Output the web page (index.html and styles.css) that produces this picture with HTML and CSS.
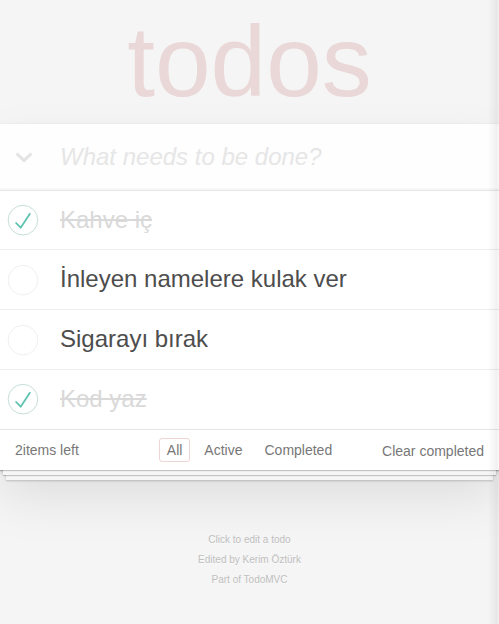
FILE: index.html
```html
<!DOCTYPE html>
<html lang="tr">
<head>
<meta charset="utf-8">
<title>todos</title>
<link rel="stylesheet" href="styles.css">
</head>
<body>
<h1 class="title">todos</h1>
<section class="todoapp">
  <header class="entry">
    <span class="toggle-all">
      <svg width="18" height="11" viewBox="0 0 18 11"><polyline points="1.5,1.5 9,8.5 16.5,1.5" fill="none" stroke="#e3e3e3" stroke-width="3"/></svg>
    </span>
    <input class="new-todo" placeholder="What needs to be done?">
  </header>
  <ul class="todo-list">
    <li class="todo done">
      <svg class="check" width="40" height="40" viewBox="-10 -18 100 135"><circle cx="50" cy="50" r="50" fill="none" stroke="#bddad5" stroke-width="3"/><path fill="#5dc2af" d="M72 25L42 71 27 56l-4 4 20 20 34-52z"/></svg>
      <span class="todo-text">Kahve iç</span>
    </li>
    <li class="todo">
      <svg class="check" width="40" height="40" viewBox="-10 -18 100 135"><circle cx="50" cy="50" r="50" fill="none" stroke="#ededed" stroke-width="3"/></svg>
      <span class="todo-text">İnleyen namelere kulak ver</span>
    </li>
    <li class="todo">
      <svg class="check" width="40" height="40" viewBox="-10 -18 100 135"><circle cx="50" cy="50" r="50" fill="none" stroke="#ededed" stroke-width="3"/></svg>
      <span class="todo-text">Sigarayı bırak</span>
    </li>
    <li class="todo done">
      <svg class="check" width="40" height="40" viewBox="-10 -18 100 135"><circle cx="50" cy="50" r="50" fill="none" stroke="#bddad5" stroke-width="3"/><path fill="#5dc2af" d="M72 25L42 71 27 56l-4 4 20 20 34-52z"/></svg>
      <span class="todo-text">Kod yaz</span>
    </li>
  </ul>
  <footer class="footer">
    <span class="count">2items left</span>
    <ul class="filters">
      <li><a class="selected" href="#/">All</a></li>
      <li><a href="#/active">Active</a></li>
      <li><a href="#/completed">Completed</a></li>
    </ul>
    <button class="clear">Clear completed</button>
  </footer>
</section>
<footer class="info">
  <p>Click to edit a todo</p>
  <p>Edited by Kerim Öztürk</p>
  <p>Part of TodoMVC</p>
</footer>
</body>
</html>
```
FILE: styles.css
```css
html, body {
  margin: 0;
  padding: 0;
}

body {
  background: #f5f5f5;
  color: #4d4d4d;
  font-family: "Liberation Sans", Arial, sans-serif;
  font-size: 14px;
  line-height: 1.4em;
  min-width: 230px;
  max-width: 550px;
  margin: 0 auto;
}

body::after {
  content: '';
  position: fixed;
  top: 0;
  right: 0;
  bottom: 0;
  width: 11px;
  background: linear-gradient(to right, rgba(0,0,0,0), rgba(0,0,0,0.055) 80%, rgba(0,0,0,0.025));
  pointer-events: none;
}

.title {
  margin: 11px 0 0;
  font-size: 100px;
  line-height: 100px;
  font-weight: 100;
  text-align: center;
  color: rgba(175, 47, 47, 0.15);
}

.todoapp {
  background: #fff;
  margin: 13px 0 40px 0;
  position: relative;
  box-shadow: 0 2px 4px 0 rgba(0, 0, 0, 0.2), 0 25px 50px 0 rgba(0, 0, 0, 0.1);
}

.entry {
  display: flex;
  align-items: center;
  background: rgba(0, 0, 0, 0.003);
  box-shadow: inset 0 -2px 1px rgba(0, 0, 0, 0.03);
}

.toggle-all {
  flex: none;
  width: 45px;
  padding-left: 15px;
  display: flex;
  margin-top: 2px;
}

.new-todo {
  flex: 1;
  min-width: 0;
  border: none;
  outline: none;
  background: transparent;
  margin: 0;
  padding: 16px 16px 16px 0;
  font-family: inherit;
  font-size: 24px;
  line-height: 1.4em;
  color: inherit;
}

.new-todo::placeholder {
  font-style: italic;
  font-weight: 300;
  color: #e6e6e6;
}

.todo-list {
  margin: 0;
  padding: 0;
  list-style: none;
  border-top: 1px solid #e6e6e6;
}

.todo {
  display: flex;
  align-items: center;
  font-size: 24px;
  border-bottom: 1px solid #ededed;
}

.todo:last-child {
  border-bottom: none;
}

.check {
  flex: none;
  display: block;
}

.todo-text {
  margin-left: 20px;
  padding: 15px 15px 15px 0;
  line-height: 1.2;
  color: #4d4d4d;
}

.done .todo-text {
  color: #d9d9d9;
  text-decoration: line-through;
}

.footer {
  position: relative;
  display: grid;
  grid-template-columns: 1fr auto 1fr;
  align-items: center;
  height: 20px;
  padding: 10px 15px;
  color: #777;
  border-top: 1px solid #e6e6e6;
  line-height: 20px;
}

.footer::before {
  content: '';
  position: absolute;
  right: 0;
  bottom: 0;
  left: 0;
  height: 50px;
  overflow: hidden;
  box-shadow: 0 1px 1px rgba(0, 0, 0, 0.2),
              0 8px 0 -3px #f6f6f6,
              0 9px 1px -3px rgba(0, 0, 0, 0.2),
              0 16px 0 -6px #f6f6f6,
              0 17px 2px -6px rgba(0, 0, 0, 0.2);
  pointer-events: none;
}

.count {
  position: relative;
  justify-self: start;
}

.filters {
  position: relative;
  display: flex;
  justify-content: center;
  margin: 0;
  padding: 0;
  list-style: none;
  white-space: nowrap;
}

.filters li {
  display: block;
}

.filters a {
  color: inherit;
  margin: 3px;
  padding: 3px 7px;
  text-decoration: none;
  border: 1px solid transparent;
  border-radius: 3px;
}

.filters a.selected {
  border-color: rgba(175, 47, 47, 0.2);
}

.clear {
  position: relative;
  justify-self: end;
  margin: 0;
  padding: 0;
  border: 0;
  background: none;
  font-family: inherit;
  font-size: 14px;
  line-height: 20px;
  color: inherit;
  top: 1px;
}

.info {
  margin: 65px auto 0;
  color: #bfbfbf;
  font-size: 10px;
  text-shadow: 0 1px 0 rgba(255, 255, 255, 0.5);
  text-align: center;
}

.info p {
  line-height: 1;
  margin: 10px 0;
}
```
